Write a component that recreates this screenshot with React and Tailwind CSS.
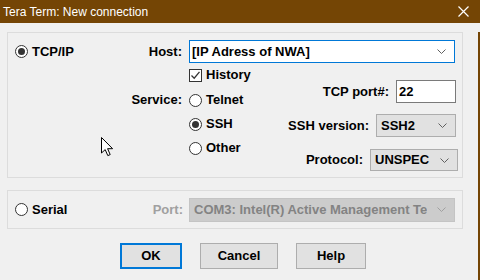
import { useState } from 'react';

const font = { fontFamily: '"Liberation Sans", Arial, sans-serif' };

function Radio({ checked }) {
  return (
    <span className="relative flex-shrink-0 w-[13px] h-[13px] rounded-full border border-[#333333] bg-white flex items-center justify-center">
      {checked && <span className="w-[7px] h-[7px] rounded-full bg-[#333333]" />}
    </span>
  );
}

function Checkbox({ checked }) {
  return (
    <span className="flex-shrink-0 w-[13px] h-[13px] border border-[#333333] bg-white flex items-center justify-center">
      {checked && (
        <svg width="11" height="11" viewBox="0 0 11 11">
          <path d="M1.5 5.5 L4.2 8.2 L9.5 1.8" fill="none" stroke="#333333" strokeWidth="1.3" />
        </svg>
      )}
    </span>
  );
}

function Chevron({ color = '#606060' }) {
  return (
    <svg width="9" height="5" viewBox="0 0 9 5" className="flex-shrink-0">
      <path d="M0.5 0.5 L4.5 4.5 L8.5 0.5" fill="none" stroke={color} strokeWidth="1" />
    </svg>
  );
}

function Select({ value, className = '' }) {
  return (
    <div className={`flex items-center justify-between pl-[4px] pr-[8px] border border-[#adadad] bg-[#e1e1e1] ${className}`}>
      <span>{value}</span>
      <Chevron />
    </div>
  );
}

function Cursor() {
  return (
    <svg width="13" height="20" viewBox="0 0 13 20" className="absolute left-[101px] top-[137px]">
      <path
        d="M0.5 0.5 L0.5 16 L4.2 12.6 L6.8 18.6 L9.2 17.6 L6.6 11.7 L11.6 11.7 Z"
        fill="white"
        stroke="black"
        strokeWidth="1"
        strokeLinejoin="miter"
      />
    </svg>
  );
}

export default function App() {
  const [host] = useState('[IP Adress of NWA]');

  return (
    <div className="relative w-[480px] h-[280px] overflow-hidden bg-[#f0f0f0] text-[13px] font-bold text-black" style={font}>
      {/* title bar */}
      <div className="h-[23px] bg-[#744505] flex items-center justify-between pl-[3px] pr-[11px]">
        <span className="text-white text-[12px] font-normal">Tera Term: New connection</span>
        <svg width="11" height="11" viewBox="0 0 11 11">
          <path d="M0.5 0.5 L10.5 10.5 M10.5 0.5 L0.5 10.5" stroke="white" strokeWidth="1.2" />
        </svg>
      </div>

      <div className="h-[257px] border-r-2 border-[#744505] pl-[7px]">
        {/* TCP/IP group */}
        <div className="mt-[9px] w-[456px] h-[146px] border border-[#dcdcdc] pt-[7px]">
          <div className="flex h-[23px] items-center">
            <div className="w-[181px] flex items-center pl-[7px] pr-[7px]">
              <Radio checked />
              <span className="ml-[4px]">TCP/IP</span>
              <span className="ml-auto">Host:</span>
            </div>
            <div className="w-[266px] h-[23px] border border-[#0078d7] bg-white flex items-center justify-between pl-[2px] pr-[8px] font-bold">
              <span>{host}</span>
              <Chevron />
            </div>
          </div>

          <div className="flex">
            {/* service */}
            <div className="flex flex-col">
              <div className="flex h-[24px] items-center">
                <div className="w-[181px]" />
                <Checkbox checked />
                <span className="ml-[4px]">History</span>
              </div>
              <div className="flex h-[24px] items-center mt-[1px]">
                <div className="w-[181px] text-right pr-[7px]">Service:</div>
                <Radio />
                <span className="ml-[4px]">Telnet</span>
              </div>
              <div className="flex h-[24px] items-center">
                <div className="w-[181px]" />
                <Radio checked />
                <span className="ml-[4px]">SSH</span>
              </div>
              <div className="flex h-[24px] items-center">
                <div className="w-[181px]" />
                <Radio />
                <span className="ml-[4px]">Other</span>
              </div>
            </div>

            {/* right options */}
            <div className="flex-1 flex flex-col items-end pr-[6px]">
              <div className="flex items-center mt-[17px]">
                <span className="mr-[7px]">TCP port#:</span>
                <div className="w-[60px] h-[23px] border border-[#7a7a7a] bg-white flex items-center pl-[2px] font-bold">22</div>
              </div>
              <div className="flex items-center mt-[11px]">
                <span className="mr-[7px]">SSH version:</span>
                <Select value="SSH2" className="w-[80px] h-[23px]" />
              </div>
              <div className="flex items-center mt-[12px] mr-[-2px]">
                <span className="mr-[7px]">Protocol:</span>
                <Select value="UNSPEC" className="w-[88px] h-[22px]" />
              </div>
            </div>
          </div>
        </div>

        {/* Serial group */}
        <div className="mt-[12px] w-[456px] h-[39px] border border-[#dcdcdc] flex items-center">
          <div className="w-[181px] flex items-center pl-[7px] pr-[6px]">
            <Radio />
            <span className="ml-[4px]">Serial</span>
            <span className="ml-auto text-[#a0a0a0]">Port:</span>
          </div>
          <div className="w-[266px] h-[24px] border border-[#c4c4c4] bg-[#cccccc] flex items-center justify-between pl-[4px] pr-[8px] text-[#838383] overflow-hidden whitespace-nowrap">
            <span className="overflow-hidden">COM3: Intel(R) Active Management Te</span>
            <Chevron color="#a0a0a0" />
          </div>
        </div>

        {/* buttons */}
        <div className="mt-[14px] flex gap-[18px] pl-[113px]">
          <button className="w-[62px] h-[26px] border-2 border-[#0078d7] bg-[#e1e1e1] font-bold">OK</button>
          <button className="w-[78px] h-[26px] border border-[#adadad] bg-[#e1e1e1] font-bold">Cancel</button>
          <button className="w-[70px] h-[26px] border border-[#adadad] bg-[#e1e1e1] font-bold">Help</button>
        </div>
      </div>

      <Cursor />
    </div>
  );
}
